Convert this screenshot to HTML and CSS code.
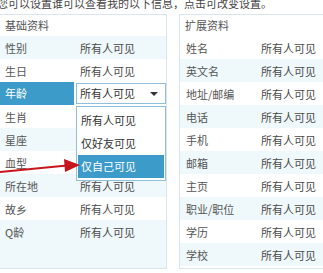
FILE: index.html
```html
<!DOCTYPE html>
<html lang="zh-CN">
<head>
    <meta charset="UTF-8">
    <title>隐私设置</title>
    <link rel="stylesheet" href="styles.css">
</head>
<body>
    <p class="tip">您可以设置谁可以查看我的以下信息，点击可改变设置。</p>
    <div class="panels">
        <div class="panel basic">
            <div class="panel-head">基础资料</div>
            <div class="row alt"><span class="label">性别</span><span class="value">所有人可见</span></div>
            <div class="row"><span class="label">生日</span><span class="value">所有人可见</span></div>
            <div class="row active">
                <span class="label">年龄</span>
                <div class="select">所有人可见<span class="caret"></span></div>
                <ul class="options">
                    <li>所有人可见</li>
                    <li>仅好友可见</li>
                    <li class="hover">仅自己可见</li>
                </ul>
            </div>
            <div class="row"><span class="label">生肖</span><span class="value">所有人可见</span></div>
            <div class="row alt"><span class="label">星座</span><span class="value">所有人可见</span></div>
            <div class="row"><span class="label">血型</span><span class="value">所有人可见</span></div>
            <div class="row alt"><span class="label">所在地</span><span class="value">所有人可见</span></div>
            <div class="row"><span class="label">故乡</span><span class="value">所有人可见</span></div>
            <div class="row alt"><span class="label">Q龄</span><span class="value">所有人可见</span></div>
            <div class="filler alt"></div>
        </div>
        <div class="panel extend">
            <div class="panel-head">扩展资料</div>
            <div class="row"><span class="label">姓名</span><span class="value">所有人可见</span></div>
            <div class="row alt"><span class="label">英文名</span><span class="value">所有人可见</span></div>
            <div class="row"><span class="label">地址/邮编</span><span class="value">所有人可见</span></div>
            <div class="row alt"><span class="label">电话</span><span class="value">所有人可见</span></div>
            <div class="row"><span class="label">手机</span><span class="value">所有人可见</span></div>
            <div class="row alt"><span class="label">邮箱</span><span class="value">所有人可见</span></div>
            <div class="row"><span class="label">主页</span><span class="value">所有人可见</span></div>
            <div class="row alt"><span class="label">职业/职位</span><span class="value">所有人可见</span></div>
            <div class="row"><span class="label">学历</span><span class="value">所有人可见</span></div>
            <div class="row alt"><span class="label">学校</span><span class="value">所有人可见</span></div>
        </div>
        <!-- 红色箭头指向“仅自己可见” -->
        <svg class="pointer" width="84" height="22" viewBox="0 0 84 22">
            <path d="M0 16 L67 9.5" stroke="#c8141c" stroke-width="2.2" fill="none"/>
            <path d="M64 3 L80 9 L65 16 Z" fill="#c8141c"/>
        </svg>
    </div>
</body>
</html>
```

FILE: styles.css
```css
html, body { margin: 0; padding: 0; }
body {
    width: 323px;
    height: 273px;
    overflow: hidden;
    background-color: #fff;
    font-family: "Noto Sans CJK SC", "Noto Sans", sans-serif;
    font-size: 11px;
    color: #555;
}
.tip {
    margin: -7px 0 0 -3px;
    height: 20px;
    line-height: 20px;
    white-space: nowrap;
    color: #444;
}
.panels {
    position: relative;
    display: flex;
    gap: 12px;
    margin-left: -1px;
    margin-top: 1px;
}
.panel {
    border: 1px solid #d9e5eb;
    background-color: #fff;
}
.panel.basic { width: 167px; height: 253px; display: flex; flex-direction: column; }
.panel.extend { width: 160px; flex-shrink: 0; }
.panel-head {
    height: 21px;
    line-height: 21px;
    padding-left: 5px;
}
.row {
    position: relative;
    display: flex;
    align-items: center;
    height: 23px;
    padding-left: 5px;
}
.alt { background-color: #eff8fb; }
.filler { flex: 1; }
.label { width: 75px; flex-shrink: 0; }
.value { color: #4a4a4a; }
.extend .row { padding-left: 6px; }
.row.active {
    background-color: #fff;
    padding-left: 0;
}
.row.active .label {
    width: 69px;
    padding-left: 5px;
    align-self: stretch;
    line-height: 23px;
    background-color: #3d9bc9;
    color: #fff;
    margin-right: 2px;
}
.select {
    position: relative;
    width: 85px;
    height: 19px;
    line-height: 19px;
    padding-left: 3px;
    border: 1px solid #8fbfdc;
    background-color: #fff;
    color: #333;
}
.caret {
    position: absolute;
    right: 7px;
    top: 8px;
    border-left: 4px solid transparent;
    border-right: 4px solid transparent;
    border-top: 4px solid #333;
}
.options {
    position: absolute;
    left: 76px;
    top: 24px;
    width: 86px;
    margin: 0;
    padding: 2px 1px;
    list-style: none;
    border: 1px solid #8fbfdc;
    background-color: #fff;
    z-index: 2;
}
.options li {
    height: 23px;
    line-height: 23px;
    padding-left: 3px;
    color: #333;
}
.options li.hover {
    background-color: #3d9bc9;
    color: #fff;
}
.pointer {
    position: absolute;
    left: 1px;
    top: 142px;
    z-index: 3;
}
```
